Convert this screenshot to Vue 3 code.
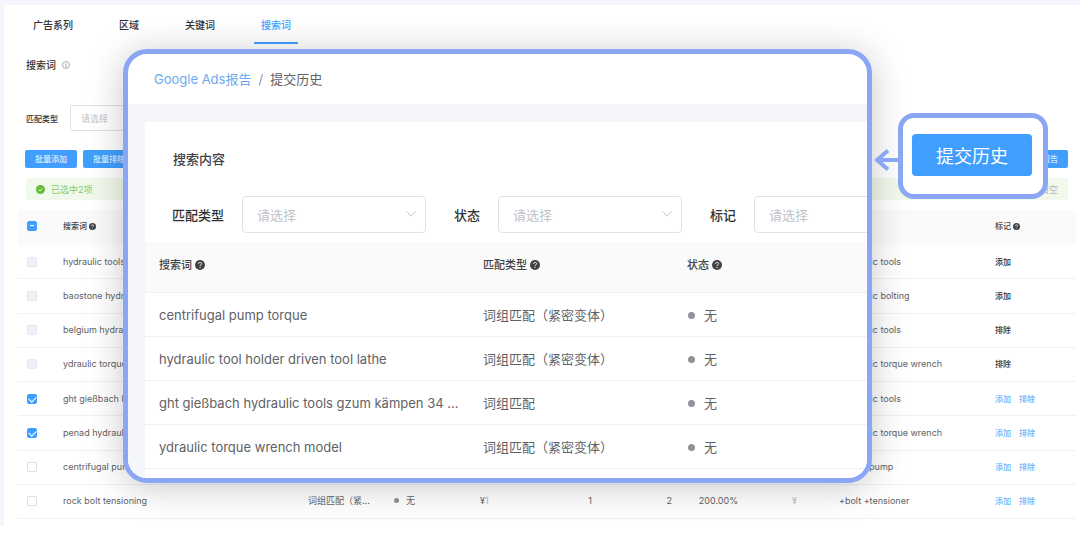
<script setup>
import { h } from 'vue'

const tabs = ['广告系列', '区域', '关键词', '搜索词']

const HelpIcon = () =>
  h('svg', { class: 'help', viewBox: '0 0 20 20', 'aria-hidden': 'true' }, [
    h('circle', { cx: 10, cy: 10, r: 10, fill: 'currentColor' }),
    h('path', {
      d: 'M7 8 C7 6 8.300 4.800 10.100 4.800 C12 4.800 13.200 6 13.200 7.500 C13.200 9.500 10.100 9.700 10.100 11.800',
      fill: 'none',
      stroke: '#fff',
      'stroke-width': 2
    }),
    h('circle', { cx: 10.1, cy: 14.7, r: 1.3, fill: '#fff' })
  ])

const terms = [
  { term: 'hydraulic tools', keyword: 'hydraulic tools', tag: '添加' },
  { term: 'baostone hydraulic', keyword: 'hydraulic bolting', tag: '添加' },
  { term: 'belgium hydraulic', keyword: 'hydraulic tools', tag: '排除' },
  { term: 'ydraulic torque wrench', keyword: 'hydraulic torque wrench', tag: '排除' },
  { term: 'ght gießbach hydraulic', keyword: 'hydraulic tools', checked: true },
  { term: 'penad hydraulic', keyword: 'hydraulic torque wrench', checked: true },
  { term: 'centrifugal pump torque', keyword: 'torque pump' },
  { term: 'rock bolt tensioning', keyword: '+bolt +tensioner' }
]

const history = [
  { term: 'centrifugal pump torque', match: '词组匹配（紧密变体）' },
  { term: 'hydraulic tool holder driven tool lathe', match: '词组匹配（紧密变体）' },
  { term: 'ght gießbach hydraulic tools gzum kämpen 34 ...', match: '词组匹配' },
  { term: 'ydraulic torque wrench model', match: '词组匹配（紧密变体）' }
]

const filters = [
  { id: 'f-match', label: '匹配类型' },
  { id: 'f-status', label: '状态' },
  { id: 'f-tag', label: '标记' }
]
</script>

<template>
  <div class="stage">
    <div class="page">
      <main class="panel">
        <nav class="tabs">
          <a v-for="(t, i) in tabs" :key="t" href="#" class="tab" :class="{ active: i === 3 }">{{ t }}</a>
        </nav>

        <h1 class="heading">
          搜索词
          <svg class="info" viewBox="0 0 16 16" aria-hidden="true">
            <circle cx="8" cy="8" r="7" fill="none" stroke="currentColor" stroke-width="1.5" />
            <path d="M6.500 7H8.200V11.500M6.300 11.500H10" fill="none" stroke="currentColor" stroke-width="1.300" />
            <circle cx="8" cy="4.500" r="1" fill="currentColor" />
          </svg>
        </h1>

        <div class="query">
          <label for="q-match">匹配类型</label>
          <select id="q-match" class="select small"><option>请选择</option></select>
        </div>

        <div class="actions">
          <button type="button" class="btn">批量添加</button>
          <button type="button" class="btn">批量排除</button>
          <button type="button" class="btn last">查看报告</button>
        </div>

        <div class="notice">
          <svg class="ok" viewBox="0 0 18 18" aria-hidden="true">
            <circle cx="9" cy="9" r="9" fill="#62bd38" />
            <path d="M5 9.200L8 12L13 6.500" fill="none" stroke="#fff" stroke-width="1.600" />
          </svg>
          <span>已选中2项</span>
          <a href="#" class="clear">清空</a>
        </div>

        <table class="terms">
          <colgroup>
            <col class="w-check" /><col /><col class="w-mid" /><col class="w-mid" /><col class="w-cost" />
            <col class="w-num" /><col class="w-num" /><col class="w-rate" /><col class="w-price" />
            <col class="w-key" /><col class="w-tag" />
          </colgroup>
          <thead>
            <tr>
              <th><input type="checkbox" aria-label="全选" :indeterminate="true" /></th>
              <th>搜索词 <HelpIcon /></th>
              <th>匹配类型</th>
              <th>状态</th>
              <th>费用</th>
              <th class="num">点击</th>
              <th class="num">展示</th>
              <th class="num">点击率</th>
              <th class="num price">均价</th>
              <th>关键词</th>
              <th>标记 <HelpIcon /></th>
            </tr>
          </thead>
          <tbody>
            <tr v-for="(r, i) in terms" :key="i">
              <td><input type="checkbox" :aria-label="r.term" :checked="r.checked" :disabled="!!r.tag" /></td>
              <td>{{ r.term }}</td>
              <td>词组匹配（紧...</td>
              <td><span class="dot"></span>无</td>
              <td>¥<span class="faint">1</span></td>
              <td class="num">1</td>
              <td class="num">2</td>
              <td class="num">200.00%</td>
              <td class="num price faint">¥</td>
              <td>{{ r.keyword }}</td>
              <td class="tag">
                <b v-if="r.tag">{{ r.tag }}</b>
                <template v-else><a href="#">添加</a><a href="#">排除</a></template>
              </td>
            </tr>
          </tbody>
        </table>
      </main>
    </div>

    <section class="dialog" aria-label="提交历史">
      <nav class="crumbs">
        <a href="#">Google Ads报告</a><span class="slash">/</span><span>提交历史</span>
      </nav>
      <div class="body">
        <div class="card">
          <h2>搜索内容</h2>
          <div class="filters">
            <div v-for="f in filters" :key="f.id" class="field">
              <label :for="f.id">{{ f.label }}</label>
              <div class="picker">
                <select :id="f.id" class="select"><option>请选择</option></select>
                <svg class="chev" viewBox="0 0 10 6" aria-hidden="true">
                  <path d="M.5 .5L5 5.200L9.500 .5" fill="none" stroke="currentColor" />
                </svg>
              </div>
            </div>
          </div>
          <table class="history">
            <colgroup><col class="h-term" /><col class="h-match" /><col /></colgroup>
            <thead>
              <tr>
                <th>搜索词 <HelpIcon /></th>
                <th>匹配类型 <HelpIcon /></th>
                <th>状态 <HelpIcon /></th>
              </tr>
            </thead>
            <tbody>
              <tr v-for="r in history" :key="r.term">
                <td>{{ r.term }}</td>
                <td>{{ r.match }}</td>
                <td><span class="dot"></span>无</td>
              </tr>
            </tbody>
          </table>
        </div>
      </div>
    </section>

    <div class="callout">
      <svg class="arrow" viewBox="0 0 26 22" aria-hidden="true">
        <path d="M26 11H3M14 1.500L3 11L14 20.500" fill="none" stroke="currentColor" stroke-width="4" />
      </svg>
      <button type="button" class="big">提交历史</button>
    </div>
  </div>
</template>

<style>
body {
  margin: 0;
  background: #fff;
}
</style>

<style scoped>
.stage {
  position: relative;
  overflow: hidden;
  font-family: Inter, "Noto Sans CJK SC", sans-serif;
  color: #606266;
}
.stage * {
  box-sizing: border-box;
}
a {
  text-decoration: none;
  color: #409eff;
}
button,
select,
input {
  font-family: inherit;
  margin: 0;
}
.page {
  background: #f5f6fd;
  padding: 5px 0 0 4px;
}
.panel {
  background: #fff;
  padding: 0 4px 7px 14px;
}
.tabs {
  display: flex;
  gap: 32px;
  height: 39px;
  padding-left: 8px;
}
.tab {
  padding: 0 7px;
  font-size: 10px;
  line-height: 40px;
  font-weight: 500;
  color: #303133;
}
.tab.active {
  color: #409eff;
  border-bottom: 2px solid #409eff;
}
.heading {
  display: flex;
  align-items: center;
  gap: 6px;
  margin: 14px 8px 0;
  font-size: 10px;
  line-height: 14px;
  font-weight: 500;
  color: #303133;
}
.info {
  width: 8px;
  height: 8px;
  color: #909399;
}
.query {
  display: flex;
  align-items: center;
  gap: 12px;
  margin: 33px 8px 0;
  font-size: 8px;
  font-weight: 500;
  color: #303133;
}
.select {
  appearance: none;
  display: block;
  width: 184px;
  height: 37px;
  padding: 0 14px;
  border: 1px solid #dfe1e6;
  border-radius: 4px;
  background: #fff;
  color: #c0c4cc;
  font-size: 13px;
}
.select.small {
  width: 130px;
  height: 26px;
  padding: 0 10px;
  border-radius: 2px;
  font-size: 9px;
}
.actions {
  display: flex;
  gap: 6px;
  margin: 19px 8px 0 7px;
}
.btn {
  width: 52px;
  height: 18px;
  padding: 0;
  border: 0;
  border-radius: 2px;
  background: #409eff;
  color: #fff;
  font-size: 8px;
  line-height: 18px;
}
.btn.last {
  margin-left: auto;
}
.notice {
  display: flex;
  align-items: center;
  gap: 6px;
  height: 22px;
  margin: 10px 8px 0;
  padding: 0 10px;
  background: #f0f9eb;
  border-radius: 2px;
  color: #84c968;
  font-size: 9px;
}
.ok {
  width: 9px;
  height: 9px;
}
.clear {
  margin-left: auto;
  color: #b4b8bf;
}
table {
  width: 100%;
  table-layout: fixed;
  border-collapse: separate;
  border-spacing: 0;
}
th,
td {
  text-align: left;
  white-space: nowrap;
  border-bottom: 1px solid #eff0f3;
}
th {
  background: #fafafa;
  color: #404245;
  font-weight: 500;
}
.terms {
  height: 309px;
  margin-top: 10px;
  font-size: 9px;
  line-height: 12px;
}
.terms th,
.terms td {
  padding: 0 9px;
}
.terms th {
  height: 35px;
  font-size: 8px;
  border-bottom: 0;
  padding-bottom: 4px;
}
.terms .num {
  text-align: right;
}
.terms .price {
  padding-right: 33px;
}
.faint {
  color: #b4b6ba;
}
.w-check { width: 36px; }
.w-mid { width: 86px; }
.w-cost { width: 50px; }
.w-num { width: 80px; }
.w-rate { width: 66px; }
.w-price { width: 83px; }
.w-key { width: 156px; }
.w-tag { width: 90px; }
.help {
  width: 7px;
  height: 7px;
  vertical-align: -1px;
}
.tag {
  font-size: 8px;
}
.tag b {
  font-weight: 500;
  color: #303133;
}
.tag a {
  margin-right: 8px;
}
input[type="checkbox"] {
  appearance: none;
  position: relative;
  display: block;
  width: 10px;
  height: 10px;
  border: 1px solid #dcdfe6;
  border-radius: 2px;
  background: #fff;
}
input[type="checkbox"]:disabled {
  background: #eff0f8;
  border-color: #e4e6f0;
}
input[type="checkbox"]:checked,
input[type="checkbox"]:indeterminate {
  background: #409eff;
  border-color: #409eff;
}
input[type="checkbox"]:checked::after {
  content: "";
  position: absolute;
  left: 2px;
  top: 0;
  width: 4px;
  height: 6px;
  border: solid #fff;
  border-width: 0 1px 1px 0;
  transform: rotate(45deg);
}
input[type="checkbox"]:indeterminate::after {
  content: "";
  position: absolute;
  left: 2px;
  right: 2px;
  top: 3px;
  height: 1px;
  background: #fff;
}
.dot {
  display: inline-block;
  width: 5px;
  height: 5px;
  margin-right: 7px;
  border-radius: 50%;
  background: #909399;
  vertical-align: 1px;
}
.dialog {
  position: absolute;
  top: 49px;
  left: 123px;
  right: 208px;
  border: 5px solid #8ba6f4;
  border-radius: 24px;
  background: #fff;
  overflow: hidden;
  box-shadow: 0 4px 36px rgba(0, 0, 0, 0.22);
}
.crumbs {
  display: flex;
  height: 50px;
  padding-left: 26px;
  font-size: 13px;
  line-height: 50px;
}
.crumbs a {
  color: #6aa9ee;
}
.slash {
  margin: 0 7px;
  color: #909399;
}
.body {
  background: #f4f6fa;
  padding: 18px 0 0 17px;
}
.card {
  background: #fff;
  padding-bottom: 9px;
}
h2 {
  margin: 0;
  padding: 27px 28px 0;
  font-size: 13px;
  line-height: 20px;
  font-weight: 500;
  color: #404245;
}
.filters {
  display: flex;
  gap: 28px;
  padding: 27px 0 9px 27px;
  overflow: hidden;
}
.field {
  display: flex;
  flex: none;
  align-items: center;
  gap: 18px;
  font-size: 13px;
  font-weight: 500;
  color: #303133;
}
.picker {
  position: relative;
}
.chev {
  position: absolute;
  right: 10px;
  top: 15px;
  width: 10px;
  height: 6px;
  color: #c0c4cc;
}
.history {
  font-size: 13px;
  line-height: 20px;
}
.history th,
.history td {
  height: 44px;
  padding: 0 14px;
}
.history th {
  height: 51px;
  padding: 0 14px 4px;
  font-size: 11px;
}
.history .help {
  width: 10px;
  height: 10px;
}
.history .dot {
  width: 7px;
  height: 7px;
  margin: 0 9px 0 1px;
}
.h-term { width: 324px; }
.h-match { width: 204px; }
.callout {
  position: absolute;
  top: 113px;
  right: 32px;
  padding: 16px 11px 18px 9px;
  border: 5px solid #8ba6f4;
  border-radius: 16px;
  background: #fff;
}
.big {
  display: block;
  width: 120px;
  height: 42px;
  padding: 0;
  border: 0;
  border-radius: 4px;
  background: #409eff;
  color: #fff;
  font-size: 18px;
}
.arrow {
  position: absolute;
  right: 100%;
  top: 31px;
  width: 26px;
  height: 22px;
  margin-right: 3px;
  color: #8ba6f4;
}
</style>
